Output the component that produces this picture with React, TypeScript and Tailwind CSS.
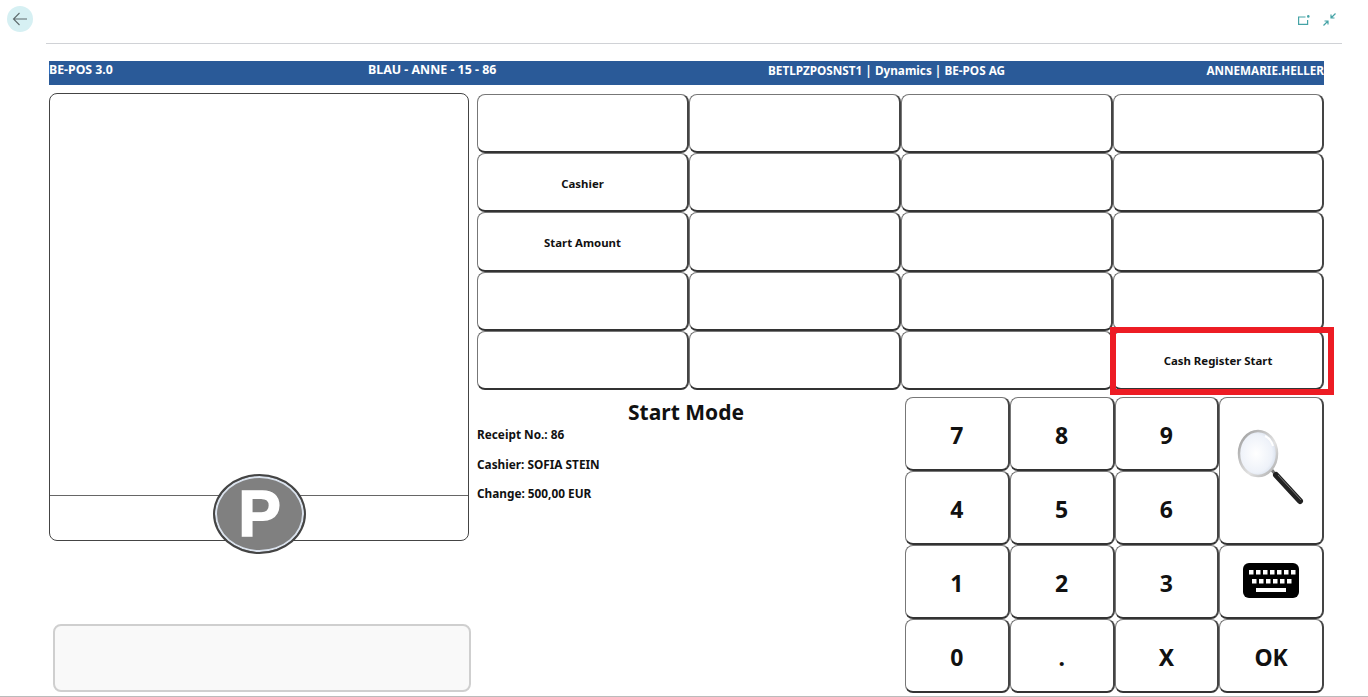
const font = "font-['Noto_Sans','Open_Sans',sans-serif]";

function GridButton({ label, className = '', children }: { label?: string; className?: string; children?: React.ReactNode }) {
  return (
    <div
      className={`flex items-center justify-center rounded-lg border border-[#777] border-r-2 border-b-2 border-r-[#444] border-b-[#333] bg-white font-bold text-[#111] ${className}`}
    >
      {label}
      {children}
    </div>
  );
}

function BackButton() {
  return (
    <div className="flex h-[26px] w-[26px] items-center justify-center rounded-full bg-[#d6f0f3]">
      <svg width="16" height="14" viewBox="0 0 16 14" fill="none" stroke="#5f6b6e" strokeWidth="1.1">
        <path d="M15 7H1.5M7.5 1 1.5 7l6 6" />
      </svg>
    </div>
  );
}

function PageIcons() {
  return (
    <div className="flex items-center gap-[13px]">
      <svg width="12" height="10" viewBox="0 0 12 10" fill="none" stroke="#45a3a6" strokeWidth="1.2">
        <path d="M7.5 2H.6v7.4h9V5" />
        <circle cx="10.3" cy="1.4" r="1.3" fill="#45a3a6" stroke="none" />
      </svg>
      <svg width="13" height="13" viewBox="0 0 13 13" fill="none" stroke="#45a3a6" strokeWidth="1.2">
        <path d="M12.5.5 8 5M8 1.5V5h3.5M.5 12.5 5 8M1.5 8H5v3.5" />
      </svg>
    </div>
  );
}

function Magnifier() {
  return (
    <svg width="72" height="84" viewBox="0 0 72 84">
      <defs>
        <radialGradient id="lens" cx="0.45" cy="0.5" r="0.6">
          <stop offset="0" stopColor="#ffffff" />
          <stop offset="0.7" stopColor="#eef2f9" />
          <stop offset="1" stopColor="#cdd7e6" />
        </radialGradient>
        <linearGradient id="rim" x1="0" y1="0" x2="1" y2="1">
          <stop offset="0" stopColor="#9a9a9a" />
          <stop offset="0.6" stopColor="#e2e2e2" />
          <stop offset="1" stopColor="#a8a8a8" />
        </linearGradient>
      </defs>
      <path d="M34 40 39 46" stroke="#777" strokeWidth="3" />
      <path d="M39 46 63 72" stroke="#222" strokeWidth="6" strokeLinecap="round" />
      <path d="M41 46 64 71" stroke="#777" strokeWidth="1" />
      <ellipse cx="21" cy="24.5" rx="19" ry="22.5" fill="url(#lens)" stroke="url(#rim)" strokeWidth="2.5" />
      <path d="M28 7q6 3 8 10" stroke="#fff" strokeWidth="2" fill="none" />
    </svg>
  );
}

function KeyboardIcon() {
  const topRow = [6, 13, 20, 27, 34, 41, 48];
  const midRow = [9, 16, 23, 30, 37, 44];
  return (
    <svg width="56" height="35" viewBox="0 0 56 35">
      <rect width="56" height="35" rx="6" fill="#000" />
      {topRow.map((x) => (
        <rect key={x} x={x} y="7" width="4.5" height="4.5" fill="#fff" />
      ))}
      {midRow.map((x) => (
        <rect key={x} x={x} y="16" width="4.5" height="4.5" fill="#fff" />
      ))}
      <rect x="13" y="25" width="30" height="4" fill="#fff" />
    </svg>
  );
}

function ParkBadge() {
  return (
    <div className="absolute left-[163px] top-[380px] flex h-[80px] w-[93px] items-center justify-center rounded-[50%] border-2 border-[#444] bg-[#808080] shadow-[inset_0_0_0_2px_#dbe3ee]">
      <span className="font-['Liberation_Sans',sans-serif] text-[64px] font-bold leading-none text-white [-webkit-text-stroke:1.5px_white]">P</span>
    </div>
  );
}

export default function App() {
  const gridLabels: Record<number, string> = { 4: 'Cashier', 8: 'Start Amount', 19: 'Cash Register Start' };
  const cells = Array.from({ length: 20 }, (_, i) => i);
  const keyClass = 'pt-[4px] text-[23px]';

  return (
    <div className={`flex h-[697px] w-[1368px] flex-col overflow-hidden border-b border-[#bbb] bg-white ${font}`}>
      <div className="flex h-[38px] shrink-0 items-start justify-between pl-[7px] pr-[32px] pt-[6px]">
        <BackButton />
        <div className="pt-[7px]">
          <PageIcons />
        </div>
      </div>
      <div className="ml-[46px] mr-[26px] mt-[5px] border-t border-[#d0d2d6]" />

      <div className="ml-[49px] mr-[44px] mt-[17px] grid h-[24px] shrink-0 grid-cols-[319px_400px_1fr_auto] bg-[#2a5a98] font-bold leading-[18px] text-white">
        <span className="text-[12.3px]">BE-POS 3.0</span>
        <span className="text-[12.4px]">BLAU - ANNE - 15 - 86</span>
        <span className="text-[11.75px]">BETLPZPOSNST1 | Dynamics | BE-POS AG</span>
        <span className="text-[11.7px]">ANNEMARIE.HELLER</span>
      </div>

      <div className="ml-[49px] mt-[8px] flex min-h-0 flex-1 gap-[8px]">
        {/* left column */}
        <div className="flex w-[420px] shrink-0 flex-col">
          <div className="relative flex h-[448px] flex-col rounded-lg border border-[#444] bg-white">
            <div className="flex-1" />
            <div className="h-[45px] border-t border-[#666]" />
            <ParkBadge />
          </div>
          <div className="ml-[4px] mr-[-2px] mt-[83px] h-[68px] rounded-lg border-2 border-[#cfcfcf] bg-[#f9f9f9]" />
        </div>

        {/* right column */}
        <div className="relative w-[847px] shrink-0 pt-[1px]">
          <div className="grid h-[296px] grid-cols-[212px_212px_212px_211px] grid-rows-5">
            {cells.map((i) => (
              <GridButton key={i} label={gridLabels[i]} className="pt-[2px] text-[11.4px]" />
            ))}
          </div>
          <div className="absolute left-[633px] top-[234px] h-[68px] w-[224px] border-[6px] border-[#ed1c24]" />

          <div className="mt-[7px] flex">
            <div className="w-[418px] text-[11.8px] font-bold text-[#111]">
              <div className="text-center text-[21px] leading-[30px]">Start Mode</div>
              <div className="mt-[-1px] flex flex-col gap-[13.5px] leading-[16px]">
                <span>Receipt No.: 86</span>
                <span>Cashier: SOFIA STEIN</span>
                <span>Change: 500,00 EUR</span>
              </div>
            </div>
            <div className="ml-[10px] grid h-[296px] w-[419px] grid-cols-4 grid-rows-4">
              {['7', '8', '9'].map((k) => (
                <GridButton key={k} label={k} className={keyClass} />
              ))}
              <GridButton className="row-span-2 pl-[4px]">
                <Magnifier />
              </GridButton>
              {['4', '5', '6'].map((k) => (
                <GridButton key={k} label={k} className={keyClass} />
              ))}
              {['1', '2', '3'].map((k) => (
                <GridButton key={k} label={k} className={keyClass} />
              ))}
              <GridButton className="pb-[3px]">
                <KeyboardIcon />
              </GridButton>
              {['0', '.', 'X', 'OK'].map((k) => (
                <GridButton key={k} label={k} className={keyClass} />
              ))}
            </div>
          </div>
        </div>
      </div>
    </div>
  );
}
